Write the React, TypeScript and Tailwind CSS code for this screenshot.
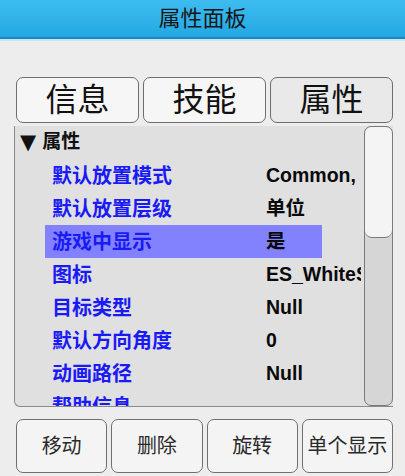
const font = { fontFamily: '"Liberation Sans", "Noto Sans CJK SC", sans-serif' };

const rows = [
  { label: "默认放置模式", value: "Common, Unit" },
  { label: "默认放置层级", value: "单位" },
  { label: "游戏中显示", value: "是", active: true },
  { label: "图标", value: "ES_WhiteSheep" },
  { label: "目标类型", value: "Null" },
  { label: "默认方向角度", value: "0" },
  { label: "动画路径", value: "Null" },
  { label: "帮助信息", value: "" },
];

const tabs = ["信息", "技能", "属性"];
const actions = ["移动", "删除", "旋转", "单个显示"];

export default function App() {
  return (
    <div className="w-[405px] h-[476px] bg-[#ededed] flex flex-col overflow-hidden" style={font}>
      {/* title bar */}
      <div className="h-[41px] shrink-0 flex flex-col">
        <div className="h-[37px] bg-gradient-to-b from-[#3dbcf0] to-[#22a8e3] flex items-center justify-center text-[22px] text-[#151515]">
          属性面板
        </div>
        <div className="h-[2px] bg-[#1689bd]" />
        <div className="h-[2px] bg-[#c8e6f2]" />
      </div>

      <div className="flex-1 flex flex-col pt-[36px] pl-[14px] pr-[12px]">
        {/* tabs */}
        <div className="flex gap-[4px] pl-[2px] h-[46px]">
          {tabs.map((t, i) => (
            <button
              key={t}
              className={`flex-1 rounded-[7px] border border-[#6e6e6e] text-[32px] leading-none text-[#111] flex items-center justify-center ${
                i === 2 ? "bg-[#e9e9e9]" : "bg-[#f6f6f6]"
              }`}
            >
              {t}
            </button>
          ))}
        </div>

        {/* property panel */}
        <div className="mt-[3px] h-[281px] flex bg-[#e0e0e0] border-l border-b border-[#8a8a8a] rounded-bl-[6px]">
          <div className="flex-1 overflow-hidden">
            <div className="w-[346px] h-full overflow-hidden">
              <div className="h-[33px] flex items-center pl-[5px] text-[19px] font-bold text-[#111]">
                <span className="text-[21px] leading-none mr-[6px]" style={{ fontFamily: '"DejaVu Sans", sans-serif' }}>
                  ▼
                </span>
                属性
              </div>
              {rows.map((r) => (
                <div
                  key={r.label}
                  className={`h-[33px] ml-[30px] w-[277px] flex items-center whitespace-nowrap ${
                    r.active ? "bg-[#8282ff]" : ""
                  }`}
                >
                  <span className="w-[221px] shrink-0 pl-[7px] text-[20px] font-bold text-[#1a1af5]">{r.label}</span>
                  <span className="text-[19.5px] font-bold text-[#0a0a0a]">{r.value}</span>
                </div>
              ))}
            </div>
          </div>
          {/* scrollbar */}
          <div className="w-[29px] shrink-0 flex flex-col bg-[#d6d6d6] border border-[#7a7a7a] rounded-[7px] overflow-hidden">
            <div className="h-[111px] bg-[#f4f4f4] border-b border-[#7a7a7a] rounded-[7px]" />
          </div>
        </div>

        {/* action buttons */}
        <div className="mt-[12px] flex gap-[4px] pl-[2px] h-[54px]">
          {actions.map((a) => (
            <button
              key={a}
              className="flex-1 rounded-[7px] border border-[#707070] bg-[#f4f4f4] text-[20px] text-[#2a2a2a] flex items-center justify-center whitespace-nowrap"
            >
              {a}
            </button>
          ))}
        </div>
      </div>
    </div>
  );
}
